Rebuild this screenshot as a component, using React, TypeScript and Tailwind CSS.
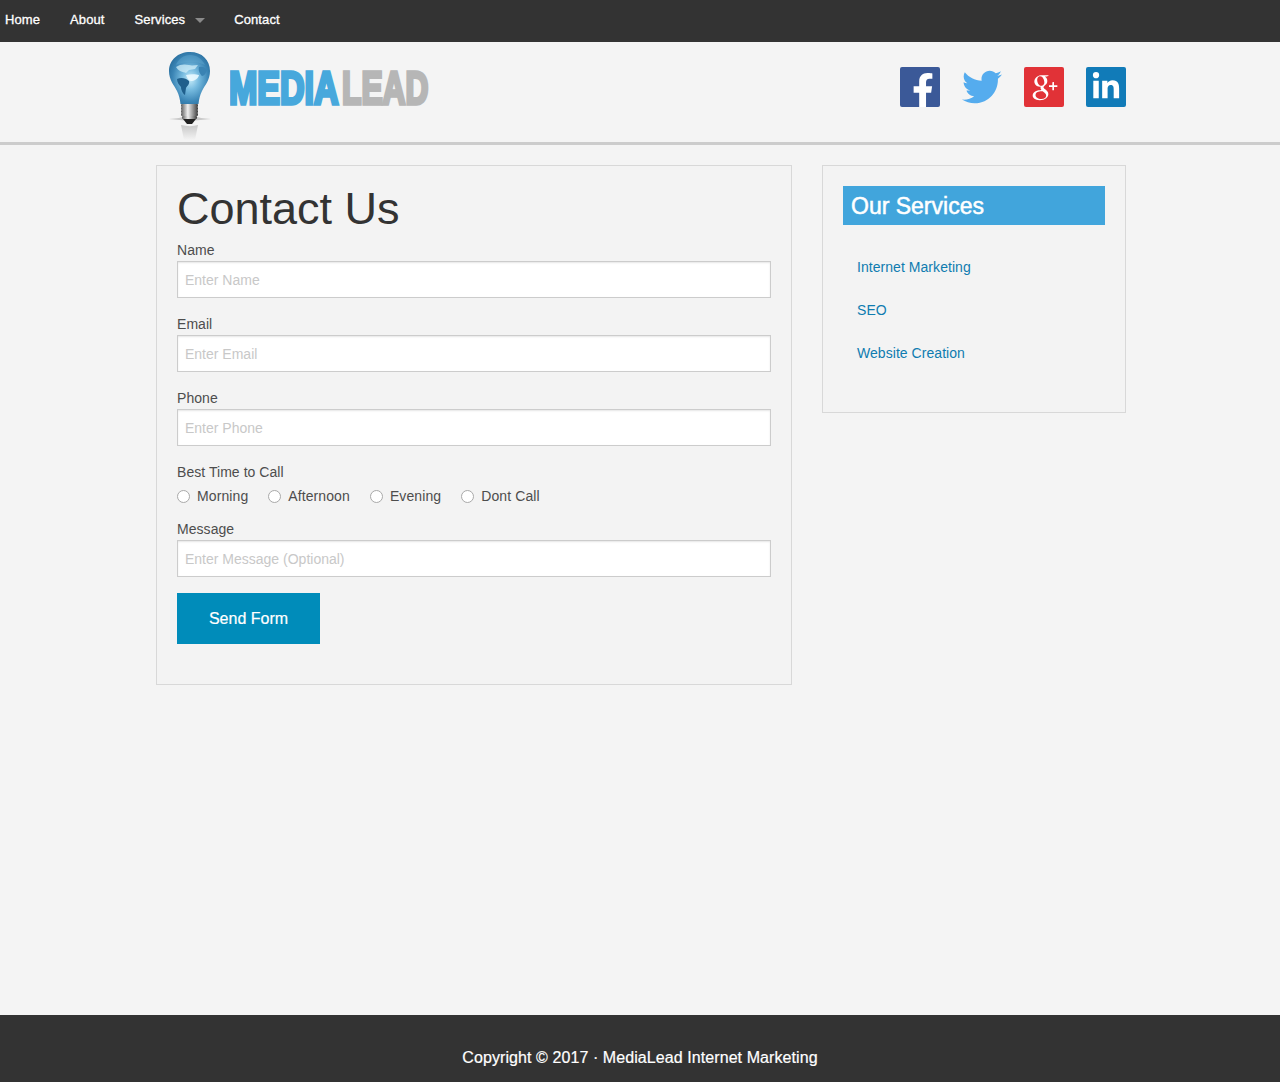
import { FaFacebookF, FaTwitter, FaLinkedinIn } from 'react-icons/fa';
import { TiSocialGooglePlus } from 'react-icons/ti';

const navLinks = ['Home', 'About', 'Services', 'Contact'];
const services = ['Internet Marketing', 'SEO', 'Website Creation'];
const times = ['Morning', 'Afternoon', 'Evening', 'Dont Call'];

function BulbLogo() {
  return (
    <svg width="60" height="92" viewBox="0 0 60 92" className="shrink-0">
      <defs>
        <radialGradient id="glass" cx="52%" cy="52%" r="58%">
          <stop offset="0%" stopColor="#c8edfa" />
          <stop offset="35%" stopColor="#78bce0" />
          <stop offset="75%" stopColor="#3c86b6" />
          <stop offset="100%" stopColor="#2a6f9e" />
        </radialGradient>
        <linearGradient id="screw" x1="0" x2="1" y1="0" y2="0">
          <stop offset="0%" stopColor="#5c5c5c" />
          <stop offset="40%" stopColor="#f0f0f0" />
          <stop offset="100%" stopColor="#3c3c3c" />
        </linearGradient>
        <linearGradient id="reflect" x1="0" x2="0" y1="0" y2="1">
          <stop offset="0%" stopColor="#c8c8c8" />
          <stop offset="100%" stopColor="#f4f4f4" />
        </linearGradient>
      </defs>
      <path d="M9 67c8-.5 13-1.500 16-3h10c3 1.500 8 2.500 16 3-7 .8-14 1.500-21 1.500S16 67.800 9 67z" fill="#c9c9c9" />
      <path d="M21 73c6 1.500 12 1.500 17 0l-3 15H24z" fill="url(#reflect)" />
      <path
        d="M30 0C18 0 9 8 9 19c0 9 5 14 8 20 2 4 3 8 3.500 13h18c.5-5 1.500-9 3.500-13 3-6 8-11 8-20C50 8 42 0 30 0z"
        fill="url(#glass)"
      />
      <path d="M16 13c2-6 8-10 14-10 7 0 12 4 15 10-8-4-20-4-29 0z" fill="#5fa5cd" opacity="0.5" />
      <path d="M16 15c4-3 9-3 13-2 3 1 6 0 9 0l-3 4-6 1-3 3c-3-1-8-2-10-6z" fill="#d7f2fb" opacity="0.7" />
      <path d="M39 15c3-1 6 0 8 3-1 3-3 6-5 6-2-2-4-5-3-9z" fill="#3a83b3" />
      <path d="M26 23c4-1 10-1 13 0-1 4-5 6-8 6-2 0-4-3-5-6z" fill="#eafaff" opacity="0.9" />
      <path d="M17 27c4-2 9-1 12 2 1 3-2 5-3 7l-1 7c-2-1-4-5-4-8-2-2-4-5-4-8z" fill="#1f5f8c" />
      <rect x="21" y="52" width="17" height="3" rx="1" fill="url(#screw)" />
      <rect x="21" y="55" width="17" height="3" rx="1" fill="url(#screw)" />
      <rect x="21" y="58" width="17" height="3" rx="1" fill="url(#screw)" />
      <rect x="21" y="61" width="17" height="3" rx="1" fill="url(#screw)" />
      <rect x="22" y="64" width="15" height="3" rx="1" fill="url(#screw)" />
      <path d="M23 67h13l-4 5h-5z" fill="#222" />
    </svg>
  );
}

function LogoWord() {
  return (
    <svg width="200" height="40" viewBox="0 0 200 40" className="shrink-0">
      <text
        transform="translate(-1 35) scale(0.74 1)"
        fontFamily="'Liberation Sans', sans-serif"
        fontWeight="700"
        fontSize="46"
        fill="#47a8dc"
        stroke="#47a8dc"
        strokeWidth="3.6"
      >
        MEDIA
      </text>
      <text
        transform="translate(112 35) scale(0.69 1)"
        fontFamily="'Liberation Sans', sans-serif"
        fontWeight="700"
        fontSize="46"
        fill="#b6b6b6"
        stroke="#b6b6b6"
        strokeWidth="3.6"
      >
        LEAD
      </text>
    </svg>
  );
}

function SocialIcons() {
  return (
    <div className="flex items-center gap-[22px]">
      <div className="w-10 h-10 rounded-[2px] bg-[#3b5998] flex items-end justify-center overflow-hidden">
        <FaFacebookF className="text-white w-[24px] h-[35px] ml-1.5 -mb-px" />
      </div>
      <div className="w-10 h-10 flex items-center justify-center">
        <FaTwitter className="text-[#55acee] w-10 h-10" />
      </div>
      <div className="w-10 h-10 rounded-[2px] bg-[#e13237] flex items-center justify-center">
        <TiSocialGooglePlus className="text-white w-10 h-10" />
      </div>
      <div className="w-10 h-10 rounded-[2px] bg-[#117bb8] flex items-center justify-center">
        <FaLinkedinIn className="text-white w-[30px] h-[30px]" />
      </div>
    </div>
  );
}

function Field({ label, placeholder }: { label: string; placeholder: string }) {
  return (
    <div className="mb-4">
      <label className="block text-sm leading-[21px] tracking-[0.05px] text-[#4d4d4d]">{label}</label>
      <input
        type="text"
        placeholder={placeholder}
        className="block w-full h-[37px] px-[7px] bg-white border border-[#cccccc] text-sm placeholder:text-[#c8c8c8] shadow-[inset_0_1px_2px_rgba(0,0,0,0.1)] outline-none"
      />
    </div>
  );
}

export default function App() {
  return (
    <div className="min-h-[1082px] flex flex-col bg-[#f4f4f4] font-['Liberation_Sans',Arial,sans-serif] text-[#333333]">
      <nav className="h-[42px] bg-[#333333] flex items-center pb-[3px] shrink-0">
        {navLinks.map(link => (
          <a
            key={link}
            href="#"
            className="flex items-center px-[15px] first:pl-[5px] text-[13px] tracking-[0.1px] text-white [-webkit-text-stroke:0.3px_white]"
          >
            {link}
            {link === 'Services' && (
              <span className="ml-[10px] mr-[-1px] mt-[1px] w-0 h-0 border-x-[5px] border-x-transparent border-t-[5px] border-t-[#8a8a8a]" />
            )}
          </a>
        ))}
      </nav>

      <header className="h-[103px] border-b-[3px] border-[#cccccc] shrink-0">
        <div className="w-[970px] ml-[156px] h-full flex items-start justify-between">
          <div className="flex items-start pl-[4px] pt-[10px]">
            <BulbLogo />
            <div className="ml-[10px] mt-[17px]">
              <LogoWord />
            </div>
          </div>
          <div className="pt-[25px]">
            <SocialIcons />
          </div>
        </div>
      </header>

      <main className="flex-1">
        <div className="w-[970px] ml-[156px] pt-5 flex items-start gap-[30px]">
          <section className="w-[636px] h-[520px] border border-[#d8d8d8] bg-[#f3f3f3] px-5 pt-[11px]">
            <h1 className="text-[45px] leading-[64px] text-[#333333] -mb-px">Contact Us</h1>
            <form>
              <Field label="Name" placeholder="Enter Name" />
              <Field label="Email" placeholder="Enter Email" />
              <Field label="Phone" placeholder="Enter Phone" />
              <div className="mb-[13px]">
                <div className="text-sm leading-[21px] tracking-[0.05px] text-[#4d4d4d] mb-[2px]">Best Time to Call</div>
                <div className="flex items-center h-[21px]">
                  {times.map(time => (
                    <label key={time} className="flex items-center mr-[20px] text-sm tracking-[0.1px] text-[#4d4d4d]">
                      <input
                        type="radio"
                        name="call"
                        className="appearance-none w-[13px] h-[13px] mt-[1px] mr-[7px] rounded-full bg-white border border-[#a9a9a9]"
                      />
                      {time}
                    </label>
                  ))}
                </div>
              </div>
              <Field label="Message" placeholder="Enter Message (Optional)" />
              <button
                type="button"
                className="w-[143px] h-[51px] bg-[#008cba] text-white text-base [-webkit-text-stroke:0.2px_white]"
              >
                Send Form
              </button>
            </form>
          </section>

          <aside className="w-[304px] h-[248px] border border-[#d8d8d8] bg-[#f3f3f3] p-5">
            <h2 className="h-[39px] bg-[#41a5dc] px-2 pt-px text-[23px] leading-[39px] text-white [-webkit-text-stroke:0.5px_white]">
              Our Services
            </h2>
            <ul className="mt-[21px] pl-[14px]">
              {services.map(service => (
                <li key={service} className="h-[43px] text-sm leading-[43px] tracking-[0.05px] text-[#0f7cb0]">
                  <a href="#">{service}</a>
                </li>
              ))}
            </ul>
          </aside>
        </div>
      </main>

      <footer className="h-[67px] bg-[#333333] shrink-0 flex justify-center pt-[33px]">
        <p className="text-base leading-5 tracking-[0.08px] text-white [-webkit-text-stroke:0.2px_white]">
          Copyright © 2017 · MediaLead Internet Marketing
        </p>
      </footer>
    </div>
  );
}
